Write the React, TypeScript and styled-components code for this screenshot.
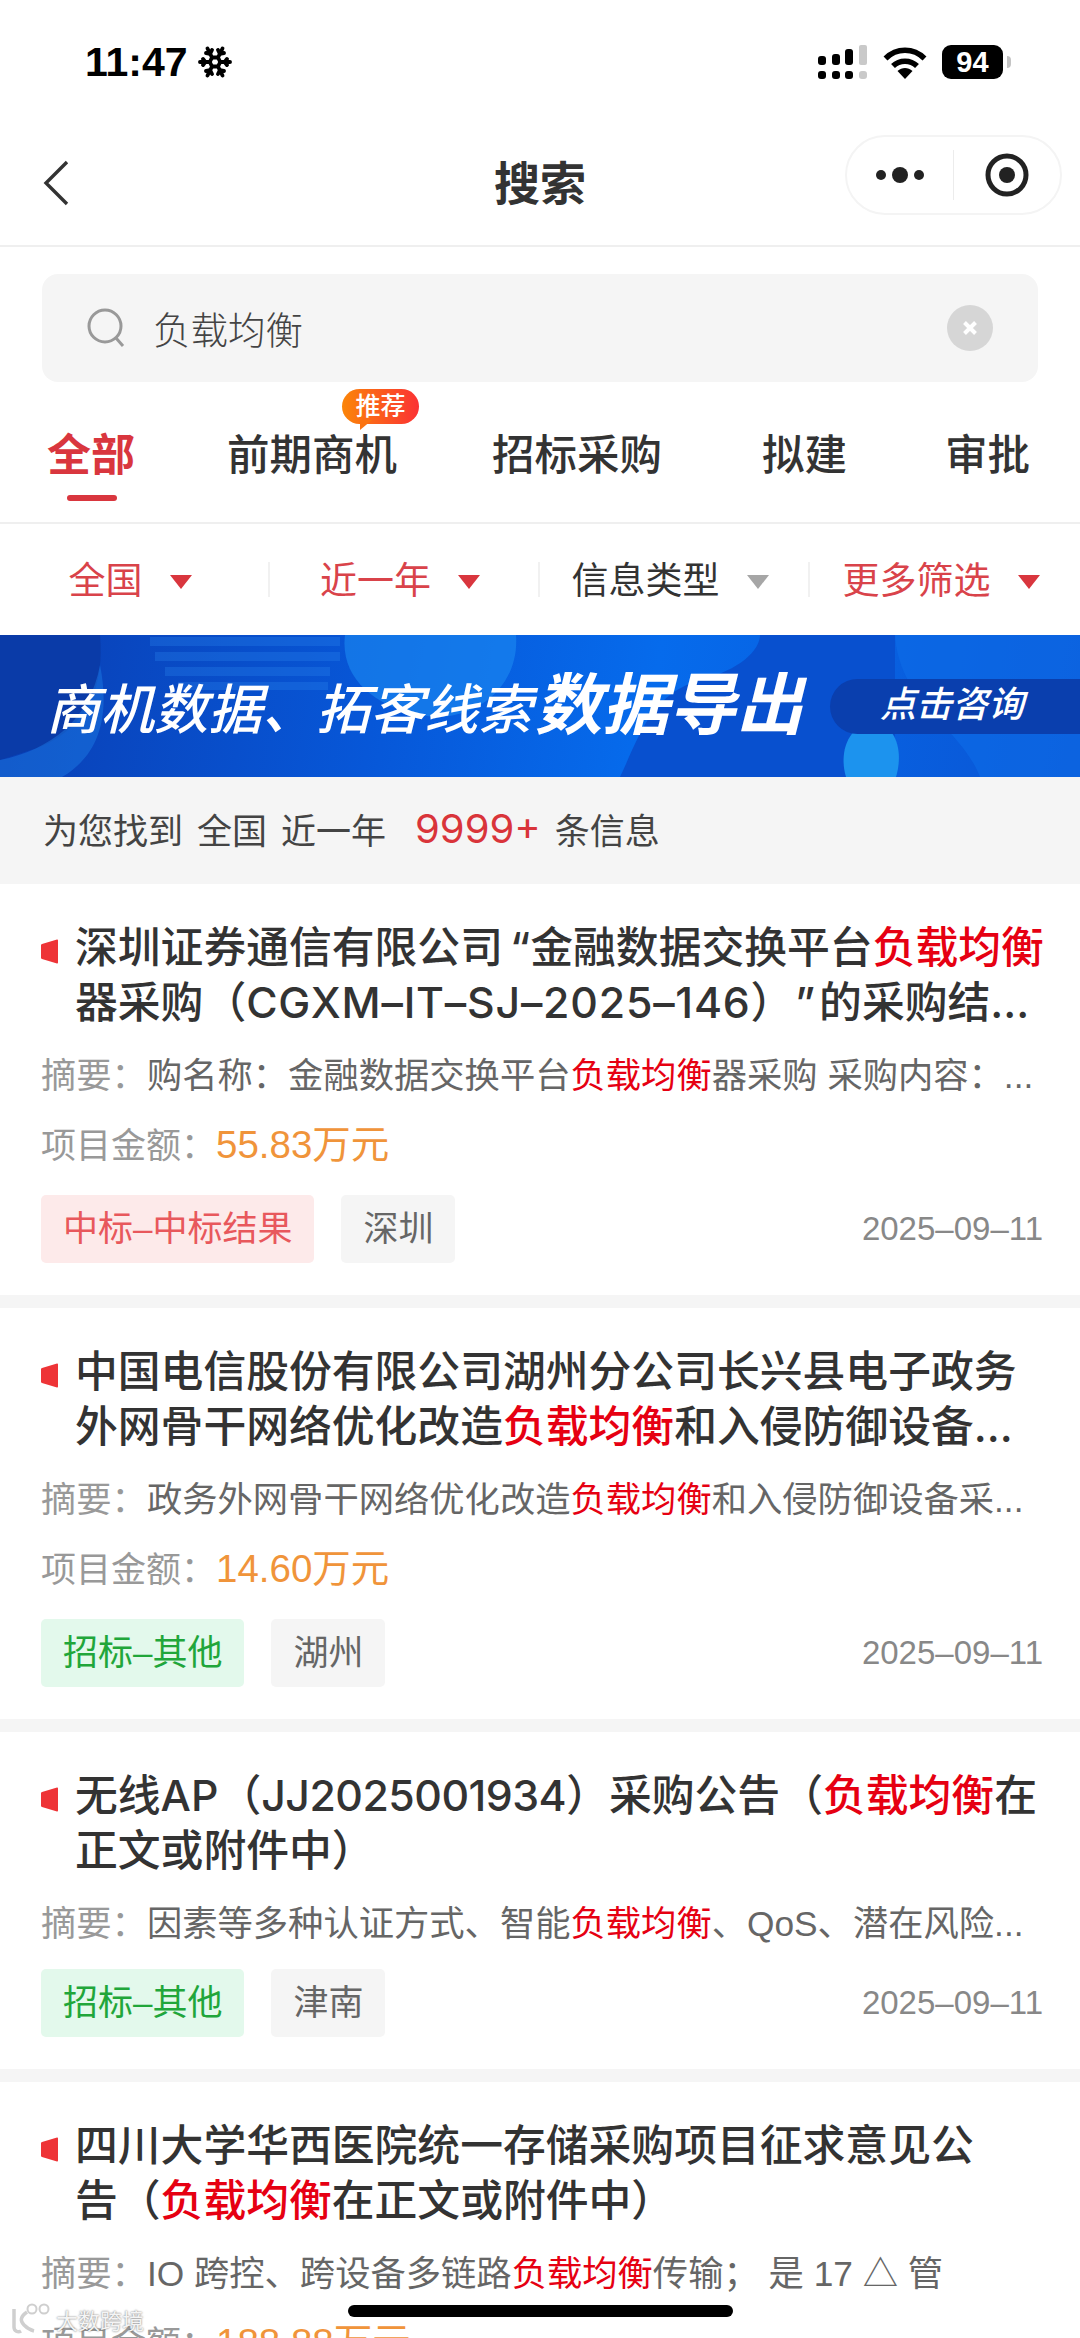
import React from 'react';
import styled, { createGlobalStyle } from 'styled-components';
import { Snowflake } from 'lucide-react';

const GlobalStyle = createGlobalStyle`
  html, body {
    margin: 0;
    padding: 0;
    background: #fff;
  }
  body {
    font-family: "Liberation Sans", "Noto Sans CJK SC", sans-serif;
    color: #333;
  }
`;

const Page = styled.div`
  position: relative;
  width: 1080px;
  height: 2338px;
  overflow: hidden;
  background: #f5f5f5;
`;

/* status bar */
const StatusBar = styled.div`
  height: 124px;
  padding: 0 69px 0 85px;
  display: flex;
  align-items: center;
  justify-content: space-between;
  background: #fff;
  color: #000;
`;

const Clock = styled.div`
  display: flex;
  align-items: center;
  gap: 9px;
  font-size: 41px;
  font-weight: 700;
`;

const StatusIcons = styled.div`
  display: flex;
  align-items: center;
  gap: 15px;
`;

const Battery = styled.div`
  position: relative;
  width: 61px;
  height: 34px;
  border-radius: 9px;
  background: #000;
  color: #fff;
  font-size: 29px;
  font-weight: 700;
  line-height: 34px;
  text-align: center;
  margin-right: 8px;

  &::after {
    content: '';
    position: absolute;
    right: -8px;
    top: 11px;
    width: 4px;
    height: 12px;
    border-radius: 0 4px 4px 0;
    background: #c4c4c4;
  }
`;

/* nav */
const Nav = styled.div`
  height: 121px;
  display: grid;
  grid-template-columns: 1fr auto 1fr;
  align-items: center;
  padding: 0 18px;
  background: #fff;
  border-bottom: 2px solid #efefef;
`;

const BackButton = styled.div`
  margin: 0 0 4px 25px;
  display: flex;
`;

const NavTitle = styled.div`
  font-size: 46px;
  font-weight: 700;
  color: #333;
  margin-bottom: 10px;
`;

const Capsule = styled.div`
  justify-self: end;
  width: 217px;
  height: 80px;
  margin-bottom: 20px;
  box-sizing: border-box;
  border: 2px solid #f4f4f4;
  border-radius: 40px;
  display: flex;
  align-items: center;
`;

const CapsuleCell = styled.div`
  flex: 1;
  display: flex;
  align-items: center;
  justify-content: center;
`;

const CapsuleDivider = styled.div`
  width: 1px;
  height: 50px;
  background: #ececec;
`;

/* search */
const SearchWrap = styled.div`
  padding: 27px 42px 0;
  background: #fff;
`;

const SearchBox = styled.div`
  height: 108px;
  border-radius: 16px;
  background: #f5f5f5;
  padding: 0 45px;
  display: flex;
  align-items: center;
  gap: 28px;
`;

const SearchText = styled.div`
  flex: 1;
  margin-bottom: 2px;
  font-size: 37.5px;
  color: #444;
  font-weight: 300;
`;

/* tabs */
const TabRow = styled.div`
  height: 142px;
  box-sizing: border-box;
  padding: 49px 0 0 47px;
  display: grid;
  grid-template-columns: 180px 265px 270px 183px auto;
  background: #fff;
  border-bottom: 2px solid #efefef;
`;

const Tab = styled.div<{ $active?: boolean }>`
  position: relative;
  height: 50px;
  line-height: 50px;
  font-size: ${({ $active }) => ($active ? '44px' : '42.5px')};
  font-weight: ${({ $active }) => ($active ? 700 : 500)};
  color: ${({ $active }) => ($active ? '#d9363e' : '#333')};

  ${({ $active }) =>
    $active &&
    `&::after {
      content: '';
      position: absolute;
      left: 20px;
      width: 50px;
      top: 64px;
      height: 6px;
      border-radius: 3px;
      background: #d9363e;
    }`}
`;

const TabBadge = styled.div`
  position: absolute;
  left: 115px;
  top: -42px;
  width: 77px;
  height: 35px;
  border-radius: 18px;
  background: linear-gradient(90deg, #fb8508, #fb3234);
  color: #fff;
  font-size: 25px;
  font-weight: 500;
  line-height: 35px;
  text-align: center;

  &::after {
    content: '';
    position: absolute;
    left: 18px;
    top: 31px;
    border-style: solid;
    border-width: 10px 12px 0 0;
    border-color: #fb7410 transparent transparent transparent;
  }
`;

/* filter */
const FilterRow = styled.div`
  height: 111px;
  display: grid;
  grid-template-columns: repeat(4, 1fr);
  align-items: center;
  background: #fff;
`;

const FilterCell = styled.div<{ $last?: boolean }>`
  height: 35px;
  padding-right: 8px;
  display: flex;
  align-items: center;
  justify-content: center;
  gap: 27px;
  border-right: ${({ $last }) => ($last ? 'none' : '2px solid #f1f1f1')};
`;

const FilterLabel = styled.span<{ $on: boolean }>`
  font-size: 37px;
  margin-bottom: 3px;
  color: ${({ $on }) => ($on ? '#d9434a' : '#333')};
`;

const Caret = styled.span<{ $on: boolean }>`
  width: 0;
  height: 0;
  margin-top: 5px;
  border-style: solid;
  border-width: 14px 11px 0 11px;
  border-color: ${({ $on }) => ($on ? '#d9363e' : '#a6a6a6')} transparent transparent transparent;
`;

/* banner */
const Banner = styled.div`
  position: relative;
  height: 142px;
  overflow: hidden;
  background: linear-gradient(100deg, #0a3fb4 0%, #0757d8 35%, #066bec 60%, #0a55d4 100%);
`;

const BannerArt = styled.svg`
  position: absolute;
  inset: 0;
`;

const BannerContent = styled.div`
  position: relative;
  height: 100%;
  padding-left: 46px;
  display: flex;
  align-items: center;
  justify-content: space-between;
`;

const BannerTitle = styled.div`
  display: flex;
  align-items: baseline;
  margin-bottom: 14px;
  font-style: italic;
  color: #fff;
  font-size: 54px;
  font-weight: 500;
  white-space: nowrap;
`;

const BannerStrong = styled.span`
  font-size: 67px;
  font-weight: 700;
  margin-left: 3px;
`;

const ConsultPill = styled.div`
  width: 250px;
  height: 55px;
  box-sizing: border-box;
  padding-left: 50px;
  border-radius: 28px 0 0 28px;
  background: #0a3fae;
  color: #fff;
  font-style: italic;
  font-weight: 500;
  font-size: 36px;
  line-height: 52px;
`;

/* result count */
const Summary = styled.div`
  height: 107px;
  padding: 0 0 4px 43px;
  box-sizing: border-box;
  display: flex;
  align-items: center;
  gap: 14px;
  font-size: 35px;
  color: #444;
`;

const SummaryCount = styled.span`
  margin-left: 15px;
  font-family: Inter, "Liberation Sans", sans-serif;
  font-size: 40px;
  color: #d9343a;
`;

/* list */
const List = styled.div`
  display: flex;
  flex-direction: column;
  gap: 13px;
`;

const Card = styled.div`
  background: #fff;
  padding: 36px 37px 32px 41px;
`;

const TitleRow = styled.div`
  display: flex;
  gap: 17px;
`;

const TitleMark = styled.svg`
  flex: none;
  margin-top: 19px;
`;

const Title = styled.div`
  font-family: Inter, "Noto Sans CJK SC", sans-serif;
  font-size: 42.8px;
  line-height: 55px;
  font-weight: 500;
  color: #333;
  white-space: pre;
`;

const TitleCode = styled.span<{ $tracking: string }>`
  letter-spacing: ${({ $tracking }) => $tracking};
`;

const TitleQuote = styled.span<{ $open?: boolean }>`
  ${({ $open }) => ($open ? 'padding-left: 7px;' : 'padding: 0 4px 0 23px;')}
`;

const Hit = styled.span`
  color: #e60012;
`;

const Snippet = styled.div`
  margin-top: 21px;
  font-size: 35.3px;
  line-height: 50px;
  color: #666;
  white-space: nowrap;
  overflow: hidden;
`;

const Muted = styled.span`
  color: #999;
`;

const Amount = styled.div`
  margin-top: 19px;
  padding-bottom: 4px;
  font-size: 35px;
  line-height: 50px;
  color: #999;
`;

const AmountValue = styled.span`
  font-size: 38.5px;
  color: #f0943a;
`;

const CardFoot = styled.div`
  margin-top: 20px;
  display: flex;
  align-items: center;
  gap: 27px;
`;

const Tag = styled.div<{ $kind: 'win' | 'bid' | 'area' }>`
  height: 68px;
  padding: 0 22px;
  border-radius: 5px;
  font-size: 35px;
  line-height: 68px;
  background: ${({ $kind }) =>
    $kind === 'win' ? '#fdeaea' : $kind === 'bid' ? '#e3f9ec' : '#f5f5f5'};
  color: ${({ $kind }) =>
    $kind === 'win' ? '#e8585c' : $kind === 'bid' ? '#21a63a' : '#666'};
`;

const DateText = styled.div`
  margin-left: auto;
  font-size: 33px;
  color: #888;
`;

/* overlays */
const Watermark = styled.div`
  position: absolute;
  left: 10px;
  top: 2303px;
  display: flex;
  align-items: center;
  gap: 2px;
  color: #f4f4f4;
  font-size: 22px;
  text-shadow: 0 0 2px rgba(0, 0, 0, 0.6);
`;

const HomeBar = styled.div`
  position: absolute;
  left: 348px;
  top: 2305px;
  width: 385px;
  height: 12px;
  border-radius: 6px;
  background: #000;
`;

const KEYWORD = '负载均衡';

const Marked: React.FC<{ text: string }> = ({ text }) => {
  const parts = text.split(KEYWORD);
  return (
    <>
      {parts.map((part, i) => (
        <React.Fragment key={i}>
          {i > 0 && <Hit>{KEYWORD}</Hit>}
          {part}
        </React.Fragment>
      ))}
    </>
  );
};

interface Item {
  title: React.ReactNode;
  snippet: string;
  amount?: string;
  tag: string;
  kind: 'win' | 'bid';
  area: string;
  date?: string;
}

const items: Item[] = [
  {
    title: (
      <>
        深圳证券通信有限公司
        <TitleQuote $open>“</TitleQuote>
        金融数据交换平台<Hit>负载均衡</Hit>
        {'\n'}器采购（<TitleCode $tracking="0.8px">CGXM–IT–SJ–2025–146</TitleCode>）<TitleQuote>”</TitleQuote>的采购结...
      </>
    ),
    snippet: '购名称：金融数据交换平台负载均衡器采购 采购内容：...',
    amount: '55.83万元',
    tag: '中标–中标结果',
    kind: 'win',
    area: '深圳',
    date: '2025–09–11',
  },
  {
    title: <Marked text={'中国电信股份有限公司湖州分公司长兴县电子政务\n外网骨干网络优化改造负载均衡和入侵防御设备...'} />,
    snippet: '政务外网骨干网络优化改造负载均衡和入侵防御设备采...',
    amount: '14.60万元',
    tag: '招标–其他',
    kind: 'bid',
    area: '湖州',
    date: '2025–09–11',
  },
  {
    title: (
      <>
        无线AP（<TitleCode $tracking="-0.5px">JJ2025001934</TitleCode>）采购公告（<Hit>负载均衡</Hit>在
        {'\n'}正文或附件中）
      </>
    ),
    snippet: '因素等多种认证方式、智能负载均衡、QoS、潜在风险...',
    tag: '招标–其他',
    kind: 'bid',
    area: '津南',
    date: '2025–09–11',
  },
  {
    title: <Marked text={'四川大学华西医院统一存储采购项目征求意见公\n告（负载均衡在正文或附件中）'} />,
    snippet: 'IO 跨控、跨设备多链路负载均衡传输； 是 17 △ 管',
    amount: '188.88万元',
    tag: '招标–其他',
    kind: 'bid',
    area: '成都',
  },
];

const filters = [
  { label: '全国', on: true },
  { label: '近一年', on: true },
  { label: '信息类型', on: false },
  { label: '更多筛选', on: true },
];

const SignalIcon = () => (
  <svg width="50" height="34" viewBox="0 0 50 34">
    <g fill="#000">
      <rect x="0" y="11" width="8" height="9" rx="3" />
      <rect x="14" y="9" width="8" height="11" rx="3" />
      <rect x="27" y="4" width="8" height="16" rx="3" />
      <rect x="0" y="26" width="8" height="8" rx="3" />
      <rect x="14" y="26" width="8" height="8" rx="3" />
      <rect x="27" y="26" width="8" height="8" rx="3" />
    </g>
    <g fill="#c9c9c9">
      <rect x="41" y="0" width="8" height="20" rx="2" />
      <rect x="41" y="26" width="8" height="8" rx="3" />
    </g>
  </svg>
);

const WifiIcon = () => (
  <svg width="44" height="33" viewBox="0 0 44 33">
    <g fill="none" stroke="#000" strokeWidth="5.5">
      <path d="M2.5 12.5 C13.5 1.5 30.5 1.5 41.5 12.5" />
      <path d="M10 20 C16.5 13.5 27.5 13.5 34 20" />
    </g>
    <path d="M14.5 25 C19 21 25 21 29.5 25 L22 33 Z" fill="#000" />
  </svg>
);

const BackIcon = () => (
  <svg width="26" height="46" viewBox="0 0 26 46">
    <path d="M24 2 L3 23 L24 44" fill="none" stroke="#333" strokeWidth="3.4" />
  </svg>
);

const DotsIcon = () => (
  <svg width="48" height="18" viewBox="0 0 48 18">
    <circle cx="5" cy="9" r="5" fill="#222" />
    <circle cx="24" cy="9" r="8" fill="#222" />
    <circle cx="43" cy="9" r="5" fill="#222" />
  </svg>
);

const TargetIcon = () => (
  <svg width="44" height="44" viewBox="0 0 44 44">
    <circle cx="22" cy="22" r="19" fill="none" stroke="#222" strokeWidth="5" />
    <circle cx="22" cy="22" r="8" fill="#222" />
  </svg>
);

const SearchIcon = () => (
  <svg width="38" height="40" viewBox="0 0 38 40">
    <circle cx="18" cy="18" r="16" fill="none" stroke="#999" strokeWidth="3" />
    <path d="M29 30 L36 38" fill="none" stroke="#999" strokeWidth="3" />
  </svg>
);

const ClearIcon = () => (
  <svg width="46" height="46" viewBox="0 0 46 46">
    <circle cx="23" cy="23" r="23" fill="#d6d6d6" />
    <path d="M17.5 17.5 L28.5 28.5 M28.5 17.5 L17.5 28.5" stroke="#fff" strokeWidth="4" />
  </svg>
);

const TitleMarkIcon = () => (
  <TitleMark width="17" height="25" viewBox="0 0 17 25">
    <path d="M1 5 L16 0.5 Q17 0.3 17 1.5 V23.5 Q17 24.7 16 24.5 L1 20 Q0 19.7 0 19 V6 Q0 5.3 1 5 Z" fill="#ee3437" />
  </TitleMark>
);

const BannerDecor = () => (
  <BannerArt width="1080" height="142" viewBox="0 0 1080 142">
    <path d="M0 0 H100 C104 50 90 90 40 112 L0 125 Z" fill="#0a3ba8" />
    <path d="M0 125 C50 115 90 85 100 30 C110 80 100 120 62 142 H0 Z" fill="#1f7fe6" opacity="0.45" />
    <g fill="#2c86ee" opacity="0.3">
      <rect x="150" y="2" width="190" height="9" />
      <rect x="155" y="17" width="185" height="9" />
      <rect x="165" y="32" width="165" height="9" />
      <rect x="178" y="47" width="150" height="8" />
    </g>
    <path d="M345 0 H516 C520 55 470 90 420 80 C370 70 340 40 345 0 Z" fill="#1c8bf2" opacity="0.6" />
    <path d="M620 142 C640 100 650 60 700 45 C740 35 760 15 760 0 H895 V142 Z" fill="#0850cf" />
    <path d="M895 0 H1080 V142 H980 C960 90 900 70 895 0 Z" fill="#0d6ce8" opacity="0.6" />
    <path d="M846 142 C838 115 850 88 875 88 C895 90 904 115 896 142 Z" fill="#1c93ee" />
  </BannerArt>
);

const WatermarkLogo = () => (
  <svg width="44" height="32" viewBox="0 0 44 32">
    <g fill="none" stroke="#cfcfcf" strokeWidth="3.5">
      <path d="M4 6 V24 C4 28 8 30 11 28" />
      <path d="M17 9 C10 14 10 18 14 22 C17 25 20 27 24 28" />
      <circle cx="22" cy="6" r="4.5" strokeWidth="2" />
      <circle cx="34" cy="6" r="4.5" strokeWidth="2" />
    </g>
  </svg>
);

const App: React.FC = () => (
  <Page>
    <GlobalStyle />
    <StatusBar>
      <Clock>
        11:47
        <Snowflake size={36} strokeWidth={2.6} color="#000" />
      </Clock>
      <StatusIcons>
        <SignalIcon />
        <WifiIcon />
        <Battery>94</Battery>
      </StatusIcons>
    </StatusBar>

    <Nav>
      <BackButton>
        <BackIcon />
      </BackButton>
      <NavTitle>搜索</NavTitle>
      <Capsule>
        <CapsuleCell>
          <DotsIcon />
        </CapsuleCell>
        <CapsuleDivider />
        <CapsuleCell>
          <TargetIcon />
        </CapsuleCell>
      </Capsule>
    </Nav>

    <SearchWrap>
      <SearchBox>
        <SearchIcon />
        <SearchText>负载均衡</SearchText>
        <ClearIcon />
      </SearchBox>
    </SearchWrap>

    <TabRow>
      <Tab $active>全部</Tab>
      <Tab>
        前期商机
        <TabBadge>推荐</TabBadge>
      </Tab>
      <Tab>招标采购</Tab>
      <Tab>拟建</Tab>
      <Tab>审批</Tab>
    </TabRow>

    <FilterRow>
      {filters.map((f, i) => (
        <FilterCell key={f.label} $last={i === filters.length - 1}>
          <FilterLabel $on={f.on}>{f.label}</FilterLabel>
          <Caret $on={f.on} />
        </FilterCell>
      ))}
    </FilterRow>

    <Banner>
      <BannerDecor />
      <BannerContent>
        <BannerTitle>
          商机数据、拓客线索
          <BannerStrong>数据导出</BannerStrong>
        </BannerTitle>
        <ConsultPill>点击咨询</ConsultPill>
      </BannerContent>
    </Banner>

    <Summary>
      <span>为您找到</span>
      <span>全国</span>
      <span>近一年</span>
      <SummaryCount>9999+</SummaryCount>
      <span>条信息</span>
    </Summary>

    <List>
      {items.map((item) => (
        <Card key={item.snippet}>
          <TitleRow>
            <TitleMarkIcon />
            <Title>{item.title}</Title>
          </TitleRow>
          <Snippet>
            <Muted>摘要：</Muted>
            <Marked text={item.snippet} />
          </Snippet>
          {item.amount && (
            <Amount>
              项目金额：<AmountValue>{item.amount}</AmountValue>
            </Amount>
          )}
          <CardFoot>
            <Tag $kind={item.kind}>{item.tag}</Tag>
            <Tag $kind="area">{item.area}</Tag>
            {item.date && <DateText>{item.date}</DateText>}
          </CardFoot>
        </Card>
      ))}
    </List>

    <Watermark>
      <WatermarkLogo />
      大数跨境
    </Watermark>
    <HomeBar />
  </Page>
);

export default App;
